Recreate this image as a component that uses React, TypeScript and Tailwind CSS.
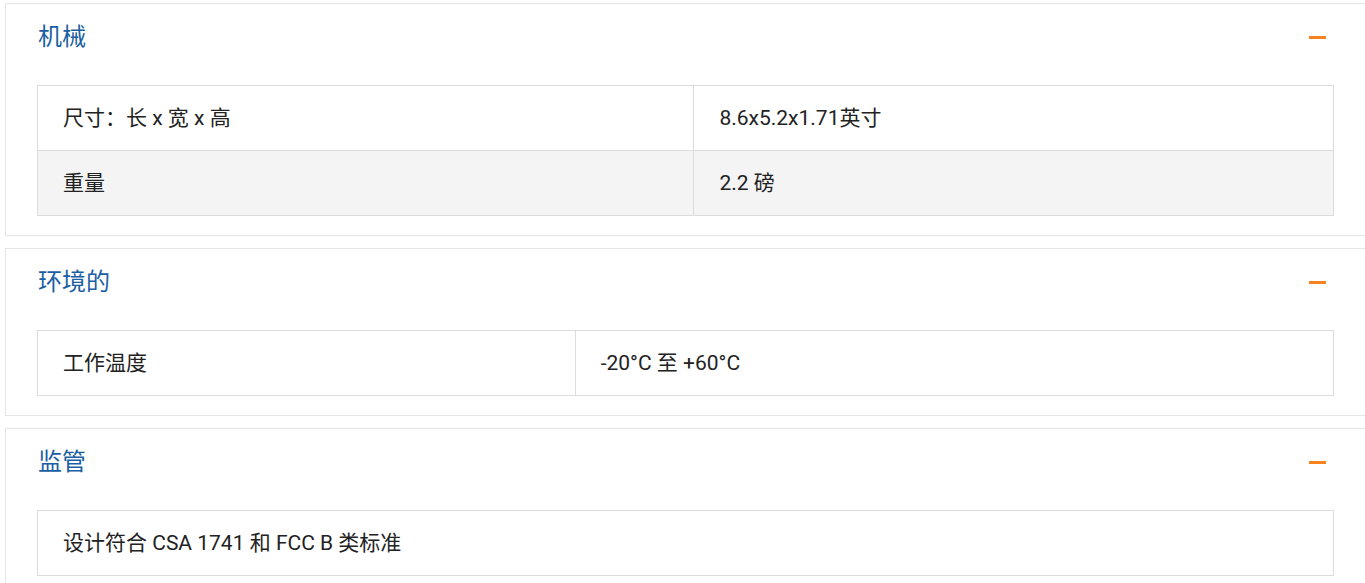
const font = "font-['Roboto','Noto_Sans_CJK_SC',sans-serif]"

type Row = string[]

const sections: { title: string; rows: Row[] }[] = [
  {
    title: '机械',
    rows: [
      ['尺寸：长 x 宽 x 高', '8.6x5.2x1.71英寸'],
      ['重量', '2.2 磅'],
    ],
  },
  {
    title: '环境的',
    rows: [['工作温度', '-20°C 至 +60°C']],
  },
  {
    title: '监管',
    rows: [['设计符合 CSA 1741 和 FCC B 类标准']],
  },
]

function Panel({ title, rows }: { title: string; rows: Row[] }) {
  return (
    <section className="w-[1361px] border border-[#e6e6e6] bg-white px-[31px] pb-[19px]">
      <div className="flex h-[66px] items-center justify-between">
        <h2 className="pl-px text-[24px] leading-none text-[#1a5ea3]">{title}</h2>
        <span className="mr-[8px] mt-[1px] block h-[3px] w-[17px] bg-[#f7821e]" />
      </div>
      <table className="mt-[15px] w-full border-collapse text-[21px] text-[#222]">
        <tbody>
          {rows.map((r, i) => (
            <tr key={i} className={i % 2 === 1 ? 'bg-[#f4f4f4]' : 'bg-white'}>
              {r.map((c, j) => (
                <td key={j} className="h-[65px] border border-[#dcdcdc] px-[25px] pt-px align-middle">
                  {c}
                </td>
              ))}
            </tr>
          ))}
        </tbody>
      </table>
    </section>
  )
}

export default function App() {
  return (
    <div className={`${font} h-[583px] overflow-hidden bg-white pl-[5px] pt-[3px]`}>
      <div className="flex flex-col gap-[12px]">
        {sections.map((s) => (
          <Panel key={s.title} title={s.title} rows={s.rows} />
        ))}
      </div>
    </div>
  )
}
